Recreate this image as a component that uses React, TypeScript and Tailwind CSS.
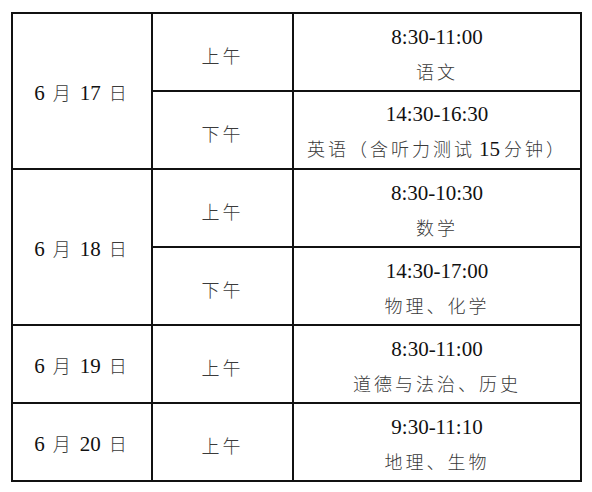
const zh = '"Noto Sans CJK SC", "Noto Sans CJK JP", sans-serif'

type Slot = { half: string; time: string; subject: string }
type Day = { date: string; day: string; slots: Slot[] }

const days: Day[] = [
  {
    date: '6',
    day: '17',
    slots: [
      { half: '上午', time: '8:30-11:00', subject: '语文' },
      { half: '下午', time: '14:30-16:30', subject: '英语（含听力测试|15|分钟）' },
    ],
  },
  {
    date: '6',
    day: '18',
    slots: [
      { half: '上午', time: '8:30-10:30', subject: '数学' },
      { half: '下午', time: '14:30-17:00', subject: '物理、化学' },
    ],
  },
  {
    date: '6',
    day: '19',
    slots: [{ half: '上午', time: '8:30-11:00', subject: '道德与法治、历史' }],
  },
  {
    date: '6',
    day: '20',
    slots: [{ half: '上午', time: '9:30-11:10', subject: '地理、生物' }],
  },
]

function Zh({ children }: { children: string }) {
  return (
    <span
      className="text-[18px] font-light tracking-[3px] text-[#3a3a3a]"
      style={{ fontFamily: zh }}
    >
      {children}
    </span>
  )
}

function Num({ children }: { children: string }) {
  return (
    <span className="text-[21px] text-[#111]" style={{ fontFamily: '"Liberation Serif", serif' }}>
      {children}
    </span>
  )
}

// "a|15|b" -> zh, number, zh
function Subject({ text }: { text: string }) {
  const parts = text.split('|')
  return (
    <span className="whitespace-nowrap">
      {parts.map((p, i) =>
        i % 2 === 1 ? (
          <span key={i} className="mx-[4px]">
            <Num>{p}</Num>
          </span>
        ) : (
          <Zh key={i}>{p}</Zh>
        )
      )}
    </span>
  )
}

export default function App() {
  return (
    <div className="w-[592px] h-[492px] bg-white pt-[12px] pl-[11px]">
      <table className="border-collapse table-fixed w-[569px]">
        <colgroup>
          <col className="w-[140px]" />
          <col className="w-[141px]" />
          <col className="w-[288px]" />
        </colgroup>
        <tbody>
          {days.map((d) =>
            d.slots.map((s, i) => (
              <tr key={d.day + i} className="h-[78px]">
                {i === 0 && (
                  <td
                    rowSpan={d.slots.length}
                    className="border-2 border-[#111] text-center align-middle pt-[6px]"
                  >
                    <Num>{d.date}</Num>
                    <span className="ml-[8px] mr-[6px]"><Zh>月</Zh></span>
                    <Num>{d.day}</Num>
                    <span className="ml-[8px]"><Zh>日</Zh></span>
                  </td>
                )}
                <td className="border-2 border-[#111] text-center align-middle pt-[6px]">
                  <Zh>{s.half}</Zh>
                </td>
                <td className="border-2 border-[#111] text-center align-middle">
                  <div className="flex flex-col items-center leading-none gap-[14px] pt-[4px]">
                    <Num>{s.time}</Num>
                    <Subject text={s.subject} />
                  </div>
                </td>
              </tr>
            ))
          )}
        </tbody>
      </table>
    </div>
  )
}
